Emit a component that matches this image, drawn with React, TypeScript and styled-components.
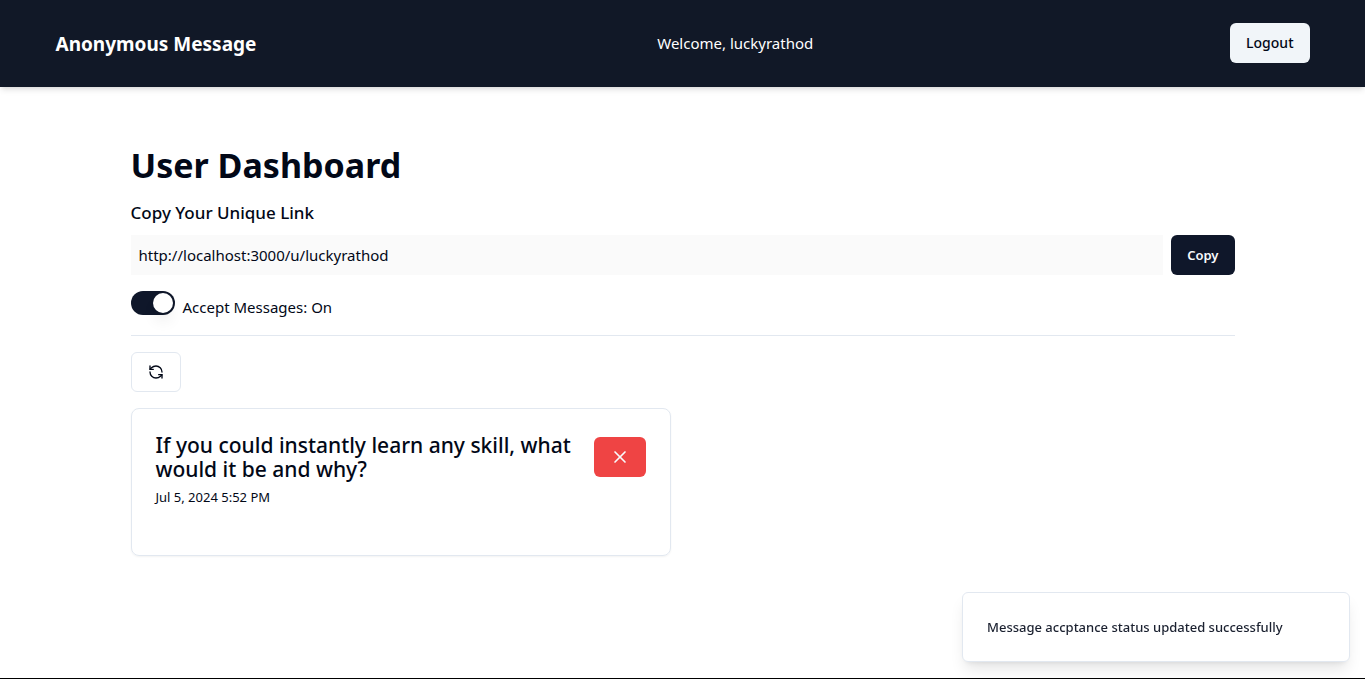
import React, { useState } from "react";
import styled, { createGlobalStyle } from "styled-components";
import { RefreshCcw, X } from "lucide-react";

const GlobalStyle = createGlobalStyle`
  *, *::before, *::after { box-sizing: border-box; }
  body {
    margin: 0;
    background: #ffffff;
    color: #020817;
    font-family: "Segoe UI", "Noto Sans", "Open Sans", sans-serif;
    font-size: 16px;
    line-height: 24px;
  }
  h1, h2, h3, p { margin: 0; }
  button, input { font-family: inherit; }
`;

const Page = styled.div`
  min-height: 100vh;
  border-bottom: 1px solid #000000;
`;

const Header = styled.header`
  padding: 23px 24px 24px;
  background: #111827;
  color: #ffffff;
  box-shadow: 0 4px 6px -1px rgba(0, 0, 0, 0.1), 0 2px 4px -2px rgba(0, 0, 0, 0.1);
`;

const HeaderInner = styled.nav`
  display: flex;
  align-items: center;
  justify-content: space-between;
  max-width: 1254px;
  margin: 0 auto;
`;

const Brand = styled.a`
  padding-top: 2px;
  color: inherit;
  font-size: 19px;
  font-weight: 700;
  line-height: 28px;
  text-decoration: none;
`;

const Welcome = styled.span`
  margin-right: 16px;
  font-size: 15px;
`;

const Button = styled.button<{ $tone: "light" | "dark" | "outline" | "danger" }>`
  display: inline-flex;
  flex: none;
  align-items: center;
  justify-content: center;
  height: 40px;
  padding: 0 16px;
  border: ${({ $tone }) => ($tone === "outline" ? "1px solid #e2e8f0" : "0")};
  border-radius: 6px;
  background: ${({ $tone }) =>
    ({ light: "#f1f5f9", dark: "#0f172a", outline: "#ffffff", danger: "#ef4444" })[$tone]};
  color: ${({ $tone }) =>
    ({ light: "#020817", dark: "#f8fafc", outline: "#020817", danger: "#f8fafc" })[$tone]};
  font-size: ${({ $tone }) => ($tone === "dark" ? 13 : 14)}px;
  font-weight: ${({ $tone }) => ($tone === "dark" ? 600 : 500)};
  line-height: 20px;
  cursor: pointer;
`;

const Main = styled.main`
  max-width: 1152px;
  margin: 32px auto 0;
  padding: 24px;
`;

const Title = styled.h1`
  margin-bottom: 12px;
  font-size: 34px;
  font-weight: 700;
  line-height: 44px;
`;

const LinkLabel = styled.label`
  display: block;
  margin-bottom: 8px;
  font-size: 17px;
  font-weight: 500;
  line-height: 28px;
`;

const LinkRow = styled.div`
  display: flex;
  gap: 8px;
  margin-bottom: 16px;
`;

const LinkInput = styled.input`
  flex: 1;
  min-width: 0;
  height: 40px;
  padding: 8px;
  border: 0;
  background: #fafafa;
  color: inherit;
  font-size: 15px;
  line-height: 24px;
`;

const SwitchRow = styled.div`
  display: flex;
  align-items: flex-start;
  gap: 8px;
`;

const Switch = styled.input`
  appearance: none;
  display: flex;
  flex: none;
  width: 44px;
  height: 24px;
  margin: 0;
  padding: 2px;
  border-radius: 12px;
  background: #e2e8f0;
  cursor: pointer;

  &::before {
    content: "";
    width: 20px;
    height: 20px;
    border-radius: 50%;
    background: #ffffff;
    box-shadow: 0 10px 15px -3px rgba(0, 0, 0, 0.1), 0 4px 6px -4px rgba(0, 0, 0, 0.1);
  }
  &:checked {
    justify-content: flex-end;
    background: #0f172a;
  }
`;

const SwitchLabel = styled.label`
  padding-top: 4px;
  font-size: 15px;
`;

const Divider = styled.hr`
  height: 1px;
  margin: 16px 0;
  border: 0;
  background: #e2e8f0;
`;

const Messages = styled.section`
  display: grid;
  grid-template-columns: repeat(2, minmax(0, 1fr));
  gap: 24px;
  margin-top: 16px;
`;

const RefreshBar = styled.div`
  display: flex;
`;

const Card = styled.article`
  padding: 24px 24px 48px;
  border: 1px solid #e2e8f0;
  border-radius: 8px;
  box-shadow: 0 1px 2px rgba(0, 0, 0, 0.05);
`;

const CardHead = styled.div`
  display: flex;
  align-items: center;
  justify-content: space-between;
  gap: 8px;
`;

const CardTitle = styled.h3`
  font-size: 21px;
  font-weight: 500;
  line-height: 24px;
`;

const CardDate = styled.p`
  margin-top: 6px;
  font-size: 13px;
  line-height: 20px;
`;

const Toast = styled.div`
  position: fixed;
  right: 15px;
  bottom: 17px;
  width: 388px;
  padding: 24px 32px 24px 24px;
  border: 1px solid #e2e8f0;
  border-radius: 6px;
  background: #ffffff;
  box-shadow: 0 10px 15px -3px rgba(0, 0, 0, 0.1), 0 4px 6px -4px rgba(0, 0, 0, 0.1);
  color: #1b2130;
  font-size: 13px;
  font-weight: 500;
  line-height: 20px;
`;

export default function App() {
  const [accepting, setAccepting] = useState(true);
  return (
    <Page>
      <GlobalStyle />
      <Header>
        <HeaderInner>
          <Brand href="#">Anonymous Message</Brand>
          <Welcome>Welcome, luckyrathod</Welcome>
          <Button $tone="light">Logout</Button>
        </HeaderInner>
      </Header>
      <Main>
        <Title>User Dashboard</Title>
        <LinkLabel htmlFor="profile-link">Copy Your Unique Link</LinkLabel>
        <LinkRow>
          <LinkInput id="profile-link" readOnly value="http://localhost:3000/u/luckyrathod" />
          <Button $tone="dark">Copy</Button>
        </LinkRow>
        <SwitchRow>
          <Switch
            id="accept"
            type="checkbox"
            role="switch"
            checked={accepting}
            onChange={(e) => setAccepting(e.target.checked)}
          />
          <SwitchLabel htmlFor="accept">Accept Messages: {accepting ? "On" : "Off"}</SwitchLabel>
        </SwitchRow>
        <Divider />
        <RefreshBar>
          <Button $tone="outline" aria-label="Refresh messages">
            <RefreshCcw size={16} />
          </Button>
        </RefreshBar>
        <Messages>
          <Card>
            <CardHead>
              <CardTitle>If you could instantly learn any skill, what would it be and why?</CardTitle>
              <Button $tone="danger" aria-label="Delete message">
                <X size={20} />
              </Button>
            </CardHead>
            <CardDate>Jul 5, 2024 5:52 PM</CardDate>
          </Card>
        </Messages>
      </Main>
      <Toast role="status">Message accptance status updated successfully</Toast>
    </Page>
  );
}
